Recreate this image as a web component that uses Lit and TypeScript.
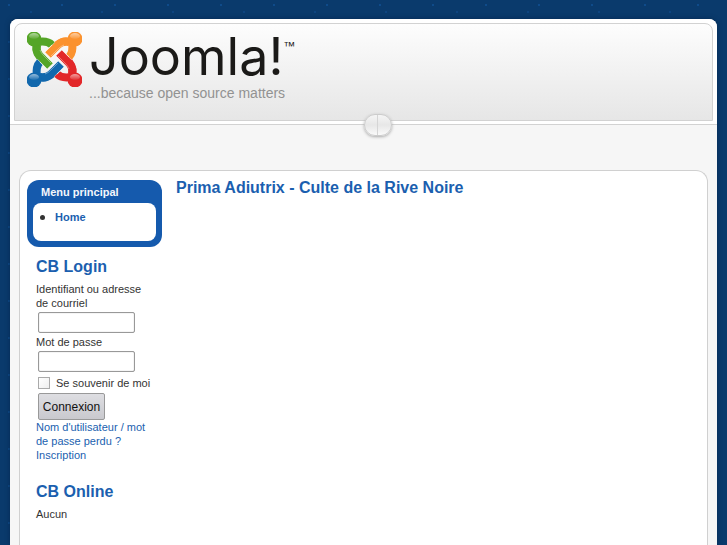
import { LitElement, html, css, svg } from "lit";
import { customElement } from "lit/decorators.js";

const ARMS = [
  { color: "#55a527", angle: 0, ball: [7, 7] },
  { color: "#fb922e", angle: 90, ball: [48, 7] },
  { color: "#e22729", angle: 180, ball: [48, 48] },
  { color: "#1268ad", angle: 270, ball: [7, 48] },
];

@customElement("joomla-mark")
class JoomlaMark extends LitElement {
  static styles = css`
    :host { display: block; flex: none; }
    svg { display: block; }
    .arm { fill: none; stroke-width: 8; stroke-linejoin: round; }
    .edge { fill: none; stroke: #fff; stroke-width: 9; }
    .shine { fill: none; stroke: #fff; stroke-opacity: 0.35; stroke-width: 1; }
  `;

  render() {
    return html`<svg width="55" height="55" viewBox="0 0 55 55" aria-hidden="true">
      <defs>
        <linearGradient id="gloss" x1="0" y1="0" x2="0" y2="1">
          <stop offset="0" stop-color="#fff" stop-opacity="0.55" />
          <stop offset="1" stop-color="#fff" stop-opacity="0.05" />
        </linearGradient>
      </defs>
      ${ARMS.map(
        (a) => svg`<g transform="rotate(${a.angle} 27.5 27.5)">
          <path class="arm" stroke=${a.color} d="M25 13 C22 10 17 9 11 10 C8 15 9 20 13 25" />
        </g>`
      )}
      ${ARMS.map(
        (a) => svg`<g transform="rotate(${a.angle} 27.5 27.5)">
          <path class="edge" d="M16 27 L23 34" />
          <path class="arm" stroke=${a.color} d="M10 13 C9 18 10 21 13 24 L23 34" />
          <path class="shine" d="M13 18 Q14 21 17 24 L24 31" />
        </g>`
      )}
      ${ARMS.map(
        (a) => svg`<circle cx=${a.ball[0]} cy=${a.ball[1]} r="7.5" fill=${a.color} />
          <ellipse cx=${a.ball[0]} cy=${a.ball[1] - 3} rx="5" ry="3" fill="url(#gloss)" />`
      )}
    </svg>`;
  }
}

@customElement("app-root")
class AppRoot extends LitElement {
  static styles = css`
    :host {
      display: block;
      box-sizing: border-box;
      min-height: 100vh;
      padding: 19px 10px 0;
      background-color: #0a3a6c;
      background-image:
        radial-gradient(circle at 9px 5px, #0f4b8a 1px, transparent 1px),
        radial-gradient(circle at 31px 12px, #0d4480 1px, transparent 1px),
        radial-gradient(circle at 50px 27px, #0f4784 1px, transparent 1px);
      background-size: 53px 37px, 71px 43px, 89px 61px;
      font: 11px/14px "Liberation Sans", Arial, sans-serif;
      color: #333;
    }
    * { box-sizing: border-box; }
    a { color: #1b5faf; text-decoration: none; }
    h1, h2, h3, p, ul { margin: 0; padding: 0; }
    .page {
      display: flex;
      flex-direction: column;
      min-height: calc(100vh - 19px);
      border-radius: 8px 8px 0 0;
      background: #f6f6f6;
      box-shadow: 0 0 5px #062a52;
    }
    .header {
      position: relative;
      padding: 4px 4px 3px;
      border-bottom: 1px solid #d2d2d2;
      border-radius: 8px 8px 0 0;
      background: #fff;
    }
    .banner {
      display: flex;
      gap: 7px;
      height: 98px;
      padding: 8px 12px;
      border: 1px solid #d2d2d2;
      border-radius: 8px 8px 0 0;
      background: linear-gradient(#fdfdfd, #e6e6e6);
    }
    .brand { display: flex; flex-direction: column; }
    .wordmark {
      display: flex;
      height: 54px;
      color: #1b1a18;
      font: 52px/50px Inter, sans-serif;
    }
    .tm { font: 12px/12px "Liberation Sans", sans-serif; padding-top: 8px; }
    .tagline { color: #929292; font: 14px/14px "Liberation Sans", sans-serif; }
    .handle {
      position: absolute;
      left: 50%;
      bottom: -12px;
      width: 28px;
      height: 22px;
      padding: 0;
      border: 1px solid #ccc;
      border-radius: 11px;
      background: linear-gradient(90deg, transparent 12px, #d5d5d5 12px, #d5d5d5 13px, transparent 13px),
        linear-gradient(#f5f5f5, #e7e7e7 50%, #fafafa);
      box-shadow: 0 1px 3px #aaa;
    }
    .content {
      flex: 1;
      display: flex;
      gap: 14px;
      margin: 45px 9px 0;
      padding: 9px 7px 20px;
      border: 1px solid #d0d0d0;
      border-bottom: 0;
      border-radius: 12px 12px 0 0;
      background: #fff;
    }
    .side { flex: none; width: 135px; }
    .menu {
      padding: 5px 6px 6px;
      border-radius: 12px;
      background: #155aad;
    }
    .menu h3 { padding: 0 8px 4px; color: #f3f6fb; font-size: 11px; line-height: 14px; }
    .menu ul {
      height: 38px;
      padding: 7px 7px 0;
      border-radius: 8px;
      background: #fff;
      font-weight: bold;
      list-style: none;
    }
    .menu li { display: flex; align-items: center; gap: 10px; }
    .menu li::before { content: ""; width: 5px; height: 5px; border-radius: 50%; background: #333; }
    h1, h2 { color: #1b5faf; font-size: 16px; line-height: 16px; }
    .module { padding: 12px 9px 0; }
    .module + .module { padding-top: 22px; }
    .module h2 { margin-bottom: 7px; }
    label { display: block; }
    .field {
      display: block;
      width: 97px;
      height: 21px;
      margin: 2px 2px 2px;
      border: 1px solid #999;
      border-radius: 2px;
      background: #fff;
      box-shadow: inset 0 0 1px #999;
      font: inherit;
    }
    .remember { display: flex; align-items: center; gap: 6px; margin: 4px 0 3px; white-space: nowrap; }
    .tick {
      appearance: none;
      width: 12px;
      height: 12px;
      margin: 0 0 0 2px;
      border: 1px solid #aaa;
      background: linear-gradient(135deg, #fff, #eee);
    }
    .submit {
      display: block;
      width: 67px;
      height: 27px;
      margin: 0 2px;
      padding: 0;
      border: 1px solid #999;
      border-radius: 2px;
      background: linear-gradient(#dedee2, #c9c9ce);
      color: #111;
      font: 12px/14px "Liberation Sans", sans-serif;
    }
    .links a { display: block; }
  `;

  render() {
    return html`
      <div class="page">
        <header class="header">
          <div class="banner">
            <joomla-mark></joomla-mark>
            <div class="brand">
              <div class="wordmark">Joomla!<span class="tm">™</span></div>
              <div class="tagline">...because open source matters</div>
            </div>
          </div>
          <button class="handle" aria-label="Panneau"></button>
        </header>
        <div class="content">
          <aside class="side">
            <nav class="menu">
              <h3>Menu principal</h3>
              <ul><li><a href="#">Home</a></li></ul>
            </nav>
            <section class="module">
              <h2>CB Login</h2>
              <form>
                <label for="user">Identifiant ou adresse de courriel</label>
                <input class="field" id="user" type="text" />
                <label for="pass">Mot de passe</label>
                <input class="field" id="pass" type="password" />
                <div class="remember">
                  <input class="tick" id="keep" type="checkbox" />
                  <label for="keep">Se souvenir de moi</label>
                </div>
                <button class="submit" type="button">Connexion</button>
              </form>
              <div class="links">
                <a href="#">Nom d'utilisateur / mot de passe perdu ?</a>
                <a href="#">Inscription</a>
              </div>
            </section>
            <section class="module">
              <h2>CB Online</h2>
              <p>Aucun</p>
            </section>
          </aside>
          <main><h1>Prima Adiutrix - Culte de la Rive Noire</h1></main>
        </div>
      </div>
    `;
  }
}
